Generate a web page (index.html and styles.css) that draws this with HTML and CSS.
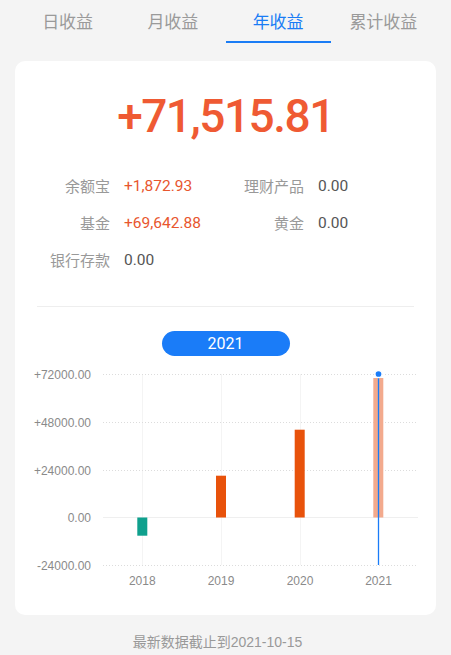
FILE: index.html
```html
<!DOCTYPE html>
<html lang="zh">
<head>
<meta charset="utf-8">
<title>年收益</title>
<link rel="stylesheet" href="styles.css">
</head>
<body>
<nav class="tabs">
  <div class="tab">日收益</div>
  <div class="tab">月收益</div>
  <div class="tab active">年收益</div>
  <div class="tab">累计收益</div>
</nav>
<main class="card">
  <div class="total">+71,515.81</div>
  <div class="items">
    <div class="item"><span class="label">余额宝</span><span class="value up">+1,872.93</span></div>
    <div class="item"><span class="label">理财产品</span><span class="value">0.00</span></div>
    <div class="item"><span class="label">基金</span><span class="value up">+69,642.88</span></div>
    <div class="item"><span class="label">黄金</span><span class="value">0.00</span></div>
    <div class="item"><span class="label">银行存款</span><span class="value">0.00</span></div>
  </div>
  <div class="divider"></div>
  <div class="pill-row"><div class="pill">2021</div></div>
  <svg class="chart" width="420" height="240" viewBox="0 0 420 240">
    <g class="vgrid">
      <line x1="127.5" y1="15" x2="127.5" y2="206"/>
      <line x1="206.5" y1="15" x2="206.5" y2="206"/>
      <line x1="285.5" y1="15" x2="285.5" y2="206"/>
    </g>
    <g class="hgrid">
      <line x1="88" y1="15.5" x2="403" y2="15.5"/>
      <line x1="88" y1="63.5" x2="403" y2="63.5"/>
      <line x1="88" y1="111.5" x2="403" y2="111.5"/>
      <line x1="88" y1="206.5" x2="403" y2="206.5"/>
    </g>
    <line class="zero" x1="88" y1="158.5" x2="403" y2="158.5"/>
    <g class="ylabels">
      <text x="76" y="19.5">+72000.00</text>
      <text x="76" y="67.5">+48000.00</text>
      <text x="76" y="115.5">+24000.00</text>
      <text x="76" y="162.5">0.00</text>
      <text x="76" y="210.5">-24000.00</text>
    </g>
    <rect class="bar-neg" x="122.3" y="158.5" width="10" height="18.2"/>
    <rect class="bar-pos" x="201" y="116.7" width="10" height="41.8"/>
    <rect class="bar-pos" x="279.7" y="70.7" width="10" height="87.8"/>
    <rect class="bar-sel" x="358.3" y="19" width="10" height="139.5"/>
    <line class="cursor" x1="363.5" y1="15" x2="363.5" y2="206"/>
    <circle class="dot" cx="363.5" cy="15" r="3.6"/>
    <g class="xlabels">
      <text x="127.3" y="226">2018</text>
      <text x="206" y="226">2019</text>
      <text x="285" y="226">2020</text>
      <text x="363.5" y="226">2021</text>
    </g>
  </svg>
</main>
<footer class="note">最新数据截止到2021-10-15</footer>
</body>
</html>
```
FILE: styles.css
```css
html, body {
  margin: 0;
  padding: 0;
}
body {
  background: #f4f4f4;
  font-family: "Liberation Sans", "Noto Sans CJK SC", sans-serif;
  width: 451px;
  height: 655px;
  overflow: hidden;
}
.tabs {
  display: flex;
  padding: 0 15px;
}
.tab {
  flex: 1;
  height: 43px;
  box-sizing: border-box;
  border-bottom: 2px solid transparent;
  line-height: 45px;
  text-align: center;
  font-size: 17px;
  color: #9a9a9a;
}
.tab.active {
  color: #1a7cf5;
  border-bottom-color: #1a7cf5;
}
.card {
  margin: 18px 15px 0;
  height: 554px;
  box-sizing: border-box;
  background: #fff;
  border-radius: 10px;
  padding-top: 27px;
}
.total {
  text-align: center;
  font-family: Roboto, "Liberation Sans", sans-serif;
  font-weight: 500;
  font-size: 46px;
  line-height: 56px;
  letter-spacing: -1.5px;
  color: #ef5a33;
}
.items {
  display: grid;
  grid-template-columns: 194px 1fr;
  grid-auto-rows: 37px;
  margin-top: 23px;
  padding-left: 35px;
}
.item {
  display: flex;
  align-items: center;
  gap: 14px;
  font-size: 15px;
}
.label {
  width: 60px;
  text-align: right;
  color: #999;
}
.value {
  font-family: Roboto, "Liberation Sans", sans-serif;
  font-size: 15.5px;
  color: #555;
}
.value.up {
  color: #e8562e;
}
.divider {
  margin: 28px 22px 0;
  height: 1px;
  background: #eeeeee;
}
.pill-row {
  display: flex;
  justify-content: center;
  margin-top: 24px;
}
.pill {
  width: 128px;
  height: 25px;
  border-radius: 13px;
  background: #1a7cf8;
  color: #fff;
  font-family: Roboto, "Liberation Sans", sans-serif;
  font-size: 16px;
  line-height: 25px;
  text-align: center;
}
.chart {
  display: block;
  margin-top: 3px;
  font-family: "Liberation Sans", sans-serif;
}
.vgrid line {
  stroke: #f4f4f4;
  stroke-width: 1;
}
.hgrid line {
  stroke: #dcdcdc;
  stroke-width: 1;
  stroke-dasharray: 1 2;
}
.zero {
  stroke: #efefef;
  stroke-width: 1;
}
.ylabels text {
  font-size: 12px;
  fill: #8a8a8a;
  text-anchor: end;
}
.xlabels text {
  font-size: 12px;
  fill: #8a8a8a;
  text-anchor: middle;
}
.bar-neg { fill: #0fa08d; }
.bar-pos { fill: #e8520b; }
.bar-sel { fill: #f3aa8d; }
.cursor {
  stroke: #1a7cf8;
  stroke-width: 1.3;
}
.dot {
  fill: #1a7cf8;
  stroke: #fff;
  stroke-width: 1.5;
}
.note {
  text-align: center;
  margin-top: 17px;
  padding-right: 16px;
  font-size: 14px;
  line-height: 20px;
  color: #999;
}
```
